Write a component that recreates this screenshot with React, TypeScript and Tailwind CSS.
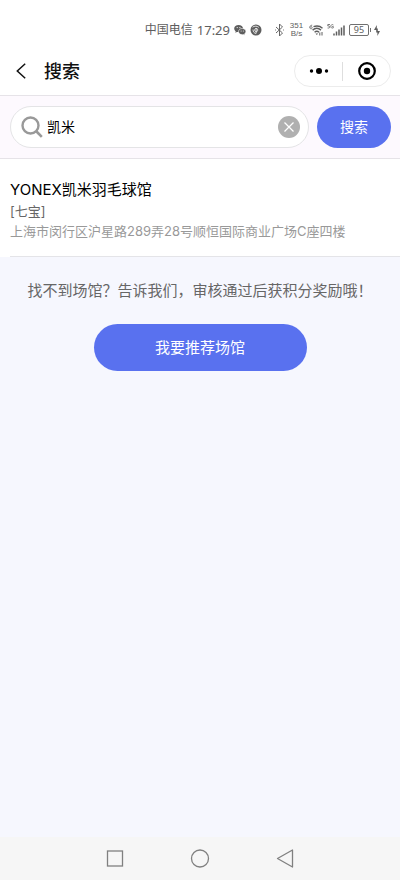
import { useState } from "react";

function StatusBar() {
  return (
    <div className="flex h-[47px] items-center justify-end pt-[13px] pr-5 text-[#5e5e5e]">
      <span className="text-[12px] leading-4">中国电信</span>
      <span className="ml-1 font-['Noto_Sans','Noto_Sans_CJK_SC',sans-serif] text-[13px] leading-4">17:29</span>
      <svg className="ml-1 h-3 w-3 shrink-0" viewBox="0 0 12 12" aria-hidden="true">
        <path d="M4.6 1C2 1 .2 2.5.2 4.5c0 1.100.6 2.100 1.500 2.800L1.300 8.800l1.700-.9c.5.1 1 .2 1.600.2 2.500 0 4.400-1.600 4.400-3.600S7.100 1 4.600 1Z" fill="#5e5e5e" />
        <path d="M8.200 4.500c2.100 0 3.700 1.300 3.700 3.100 0 1-.5 1.800-1.300 2.300l.3 1.300-1.400-.7c-.4.1-.8.2-1.300.2-2.100 0-3.700-1.400-3.700-3.100s1.600-3.100 3.700-3.100Z" fill="#5e5e5e" stroke="#fff" strokeWidth=".6" />
        <circle cx="3.200" cy="3.600" r=".6" fill="#fff" />
        <circle cx="5.900" cy="3.600" r=".6" fill="#fff" />
        <circle cx="7.100" cy="6.900" r=".5" fill="#fff" />
        <circle cx="9.300" cy="6.900" r=".5" fill="#fff" />
      </svg>
      <svg className="ml-1 h-3 w-3 shrink-0" viewBox="0 0 12 12" fill="none" aria-hidden="true">
        <circle cx="6" cy="6" r="5.500" fill="#5e5e5e" />
        <path d="M2.500 3.200c2-1.400 4.600-1.400 6.300.2M6.200 4v5.200M3 5.500c0 2.300 1.200 3.800 3.200 4" stroke="#fff" strokeWidth=".8" />
        <circle cx="6.200" cy="6" r="1.600" stroke="#fff" strokeWidth=".7" />
      </svg>
      <svg className="ml-3 h-[14px] w-[11px] shrink-0" viewBox="0 0 11 14" fill="none" stroke="#666" aria-label="蓝牙">
        <path d="m2 4 6.500 6L5.500 13V1l3 3L2 10M1 7h.8M9.200 7h.8" />
      </svg>
      <span className="ml-1 flex w-[15px] flex-col items-center font-['Liberation_Sans',sans-serif] text-[8px] leading-[8px]">
        <span>351</span>
        <span>B/s</span>
      </span>
      <svg className="ml-[5px] h-[14px] w-[15px] shrink-0" viewBox="0 0 15 14" fill="none" stroke="#5e5e5e" aria-label="无线网络">
        <path d="M3.200 2.200C1.500 2.200.8 3.200.8 4.300c0 2 2.400 2 2.400.3 0-1.200-1.700-1.200-2.200-.1" strokeWidth=".8" />
        <path d="M4.500 3.700c3.400-1.200 6.700-.5 9 1.500M3.600 7.100c2.600-2.200 6-2 8.400 0M5.600 9.200c1.400-1.200 3.100-1.200 4.500 0" strokeWidth="1.400" />
        <path d="m7.800 12-1.300-1.500h2.600Z" fill="#5e5e5e" stroke="none" />
        <path d="M10.800 12.500V9.500M13 9v3.500" />
      </svg>
      <svg className="ml-[3px] h-[14px] w-[18px] shrink-0" viewBox="0 0 18 14" fill="none" stroke="#5e5e5e" aria-label="5G 信号">
        <path d="M3 1.500H.8V3h1c1.300 0 1.300 2 0 2H.6M6.400 2C5 1 3.800 2 3.800 3.300 3.800 5 5 5.400 6.300 4.800V3.500H5.200" strokeWidth=".8" />
        <path d="M7 12.500v-2M9.500 12.500v-4M12 12.500V6.500M14.500 12.500v-8M17 12.500v-10" strokeWidth="1.500" />
      </svg>
      <span className="ml-1 flex h-3 w-5 items-center justify-center rounded-[2px] border border-[#707070] font-['Noto_Sans',sans-serif] text-[9px] leading-[10px]">95</span>
      <span className="ml-px h-1 w-px bg-[#707070]" />
      <svg className="ml-[3px] h-[11px] w-[6px] shrink-0" viewBox="0 0 6 11" fill="#5e5e5e" aria-label="正在充电">
        <path d="M2.800 0 0 5h2.200v2.500h1.200V11L6 6H3.800V3.500h-1Z" />
      </svg>
    </div>
  );
}

function TitleBar() {
  return (
    <header className="flex h-12 items-center justify-between pr-[9px] pl-4">
      <div className="flex items-center">
        <button type="button" aria-label="返回" className="flex h-8 w-7 items-center">
          <svg className="h-4 w-[10px]" viewBox="0 0 10 16" fill="none" stroke="#111" strokeWidth="1.500">
            <path d="M9.200.8 1.300 8l7.900 7.200" />
          </svg>
        </button>
        <h1 className="pt-[2px] text-[18px] leading-6 font-medium text-[#111]">搜索</h1>
      </div>
      <div className="flex h-8 w-[97px] items-center rounded-full border border-[#ececec] bg-white">
        <button type="button" aria-label="更多" className="flex h-full flex-1 items-center justify-center">
          <svg className="h-2 w-5" viewBox="0 0 20 8">
            <circle cx="2.500" cy="4" r="1.700" />
            <circle cx="10" cy="4" r="3" />
            <circle cx="17.500" cy="4" r="1.700" />
          </svg>
        </button>
        <span className="h-[19px] w-px bg-[#dedede]" />
        <button type="button" aria-label="关闭" className="flex h-full flex-1 items-center justify-center">
          <svg className="h-[18px] w-[18px]" viewBox="0 0 18 18">
            <circle cx="9" cy="9" r="7.800" fill="none" stroke="#000" strokeWidth="2.200" />
            <circle cx="9" cy="9" r="3.200" />
          </svg>
        </button>
      </div>
    </header>
  );
}

function SearchForm() {
  const [query, setQuery] = useState("凯米");
  return (
    <form
      className="flex gap-2 border-y border-[#e6e3e8] bg-[#fdf9fe] py-[10px] pr-[9px] pl-[10px]"
      onSubmit={(event) => event.preventDefault()}
    >
      <div className="flex h-[42px] min-w-0 flex-1 items-center rounded-full border border-[#e4e4e6] bg-white pr-2 pl-[10px]">
        <label htmlFor="query" aria-label="搜索场馆" className="shrink-0">
          <svg className="h-[22px] w-[22px]" viewBox="0 0 22 22" fill="none" stroke="#999">
            <circle cx="9.500" cy="9.500" r="8" strokeWidth="2.400" />
            <path d="m15.500 15.500 5.300 5.300" strokeWidth="2.600" />
          </svg>
        </label>
        <input
          id="query"
          type="text"
          value={query}
          onChange={(event) => setQuery(event.target.value)}
          className="ml-1 h-6 min-w-0 flex-1 bg-transparent text-[14px] leading-6 text-black outline-none"
        />
        <button type="button" aria-label="清除" onClick={() => setQuery("")} className="shrink-0">
          <svg className="h-[22px] w-[22px]" viewBox="0 0 22 22">
            <circle cx="11" cy="11" r="11" fill="#b0b0b0" />
            <path d="m6.500 6.500 9 9m0-9-9 9" stroke="#fff" strokeWidth="1.300" />
          </svg>
        </button>
      </div>
      <button type="submit" className="h-[42px] w-[74px] shrink-0 rounded-full bg-[#5971ef] text-[14px] leading-5 text-white">
        搜索
      </button>
    </form>
  );
}

function SystemNav() {
  return (
    <nav className="flex h-[43px] items-center justify-center gap-[65px] bg-[#f6f6f6]">
      <button type="button" aria-label="最近任务">
        <svg className="h-5 w-5" viewBox="0 0 20 20" fill="none" stroke="#808080" strokeWidth="1.300">
          <rect x="2.500" y="2" width="15" height="15" />
        </svg>
      </button>
      <button type="button" aria-label="主屏幕">
        <svg className="h-5 w-5" viewBox="0 0 20 20" fill="none" stroke="#808080" strokeWidth="1.300">
          <circle cx="10" cy="9.500" r="8.500" />
        </svg>
      </button>
      <button type="button" aria-label="后退">
        <svg className="h-5 w-5" viewBox="0 0 20 20" fill="none" stroke="#808080" strokeWidth="1.300" strokeLinejoin="round">
          <path d="M17.500 1v17L2.500 9.500Z" />
        </svg>
      </button>
    </nav>
  );
}

export default function App() {
  return (
    <div className="flex min-h-screen flex-col bg-white font-['Inter','Noto_Sans_CJK_SC',sans-serif]">
      <StatusBar />
      <TitleBar />
      <SearchForm />
      <main className="flex flex-1 flex-col bg-[#f6f7fe]">
        <ul className="bg-white pl-[10px]">
          <li className="border-b border-[#e4e4e8] pt-5 pb-[14px]">
            <h2 className="text-[15px] leading-[22px] text-black">YONEX凯米羽毛球馆</h2>
            <p className="text-[13px] leading-5 text-[#666]">[七宝]</p>
            <p className="text-[13px] leading-[21px] text-[#999]">上海市闵行区沪星路289弄28号顺恒国际商业广场C座四楼</p>
          </li>
        </ul>
        <section className="flex flex-col items-center pt-[22px]">
          <p className="text-[15px] leading-6 whitespace-nowrap text-[#666]">找不到场馆？告诉我们，审核通过后获积分奖励哦！</p>
          <button type="button" className="mt-[21px] h-[47px] w-[213px] rounded-full bg-[#5971ef] text-[15px] leading-6 text-white">
            我要推荐场馆
          </button>
        </section>
      </main>
      <SystemNav />
    </div>
  );
}
